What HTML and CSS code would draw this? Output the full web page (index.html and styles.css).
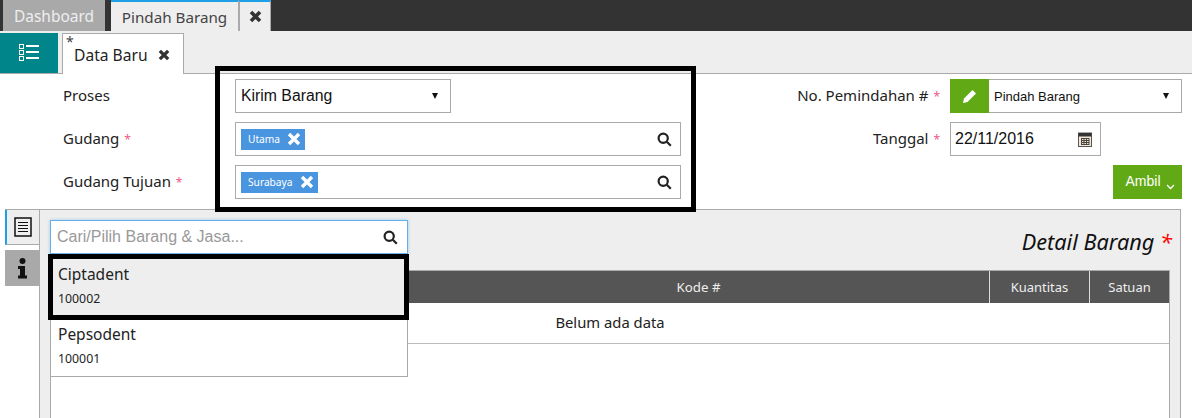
FILE: index.html
```html
<!DOCTYPE html>
<html lang="id">
<head>
<meta charset="utf-8">
<title>Pindah Barang</title>
<link rel="stylesheet" href="styles.css">
</head>
<body>
<nav class="topbar">
  <span class="top-tab dash">Dashboard</span>
  <span class="top-tab active">Pindah Barang</span>
  <span class="top-tab close"><svg width="13" height="13" viewBox="0 0 13 13"><path d="M2 2l9 9M11 2l-9 9" class="x-dark"/></svg></span>
</nav>
<div class="subbar">
  <button class="list-btn"><svg width="20" height="18" viewBox="0 0 20 18"><g fill="none" stroke="#fff"><rect x="0.5" y="0.5" width="4" height="4"/><rect x="0.5" y="6.5" width="4" height="4"/><rect x="0.5" y="12.5" width="4" height="4"/></g><path d="M7 1h13v2H7zM7 7h13v2H7zM7 13h13v2H7z" fill="#fff"/></svg></button>
  <div class="doc-tab"><sup class="mark">*</sup><span>Data Baru</span><svg width="12" height="12" viewBox="0 0 13 13"><path d="M2 2l9 9M11 2l-9 9" class="x-dark"/></svg></div>
</div>
<form class="form">
  <div class="col-left">
    <div class="row"><label class="lbl">Proses</label>
      <div class="field sel-short"><span class="val">Kirim Barang</span><i class="caret"></i></div></div>
    <div class="row"><label class="lbl">Gudang <b class="req">*</b></label>
      <div class="field multi"><span class="chip">Utama<svg width="14" height="14" viewBox="0 0 14 14"><path d="M2 2l10 10M12 2L2 12" class="x-white"/></svg></span><svg class="mag" width="15" height="15" viewBox="0 0 15 15"><circle cx="6.2" cy="6.2" r="4.6" class="mag-s"/><path d="M9.8 9.8l4 4" class="mag-s"/></svg></div></div>
    <div class="row"><label class="lbl">Gudang Tujuan <b class="req">*</b></label>
      <div class="field multi"><span class="chip">Surabaya<svg width="14" height="14" viewBox="0 0 14 14"><path d="M2 2l10 10M12 2L2 12" class="x-white"/></svg></span><svg class="mag" width="15" height="15" viewBox="0 0 15 15"><circle cx="6.2" cy="6.2" r="4.6" class="mag-s"/><path d="M9.8 9.8l4 4" class="mag-s"/></svg></div></div>
  </div>
  <div class="col-right">
    <div class="row-r"><label class="lbl-r">No. Pemindahan # <b class="req">*</b></label>
      <div class="group"><span class="edit"><svg width="16" height="16" viewBox="0 0 16 16"><path d="M1 15l1-4.5L10.500 2l3.500 3.500L5.500 14z" fill="#fff"/></svg></span><div class="field sel-no"><span class="val-small">Pindah Barang</span><i class="caret"></i></div></div></div>
    <div class="row-r"><label class="lbl-r">Tanggal <b class="req">*</b></label>
      <div class="field date"><span class="val">22/11/2016</span><svg width="14" height="15" viewBox="0 0 14 15"><rect x="0.5" y="1" width="13" height="13.500" fill="#f4e8d4" stroke="#555"/><rect x="0.5" y="1" width="13" height="3.500" fill="#333"/><path d="M3 6.500h8M3 8.500h8M3 10.500h8M3 12.500h8M3.500 6v7M6 6v7M8.500 6v7M11 6v7" stroke="#444" stroke-width="1"/></svg></div></div>
    <div class="row-r end"><button type="button" class="ambil">Ambil<svg width="9" height="6" viewBox="0 0 9 6"><path d="M1 1l3.500 3.500L8 1" fill="none" stroke="#fff" stroke-width="1.300"/></svg></button></div>
  </div>
</form>
<section class="detail">
  <aside class="side">
    <span class="side-tab on"><svg width="18" height="20" viewBox="0 0 18 20"><rect x="1" y="1" width="16" height="18" fill="none" stroke="#111" stroke-width="1.500"/><path d="M4 5.500h10M4 8.500h10M4 11.500h10M4 14.500h10" stroke="#111" stroke-width="1.200"/></svg></span>
    <span class="side-tab off"><svg width="11" height="21" viewBox="0 0 11 21"><circle cx="5.500" cy="3" r="3" fill="#111"/><path d="M1 8h7v9.500h2V20.500H1v-3h2V11H1z" fill="#111"/></svg></span>
  </aside>
  <div class="panel">
    <div class="panel-head">
      <div class="search"><span class="ph">Cari/Pilih Barang &amp; Jasa...</span><svg class="mag" width="15" height="15" viewBox="0 0 15 15"><circle cx="6.200" cy="6.200" r="4.600" class="mag-s"/><path d="M9.800 9.800l4 4" class="mag-s"/></svg></div>
      <h2 class="title">Detail Barang <b class="title-req">*</b></h2>
    </div>
    <div class="sheet">
      <div class="thead">
        <span class="th c1"></span>
        <span class="th c2">Kode #</span>
        <span class="th c3">Kuantitas</span>
        <span class="th c4">Satuan</span>
      </div>
      <div class="empty">Belum ada data</div>
    </div>
  </div>
</section>
<ul class="results">
  <li class="res hot"><span class="res-name">Ciptadent</span><span class="res-code">100002</span></li>
  <li class="res"><span class="res-name">Pepsodent</span><span class="res-code">100001</span></li>
</ul>
<div class="hl hl-form"></div>
<div class="hl hl-item"></div>
</body>
</html>
```
FILE: styles.css
```css
* { box-sizing: border-box; }
html, body { margin: 0; padding: 0; height: 418px; overflow: hidden; }
body { position: relative; background: #fff; color: #222; font-family: "Noto Sans", "Open Sans", sans-serif; font-size: 14px; }

.x-dark { stroke: #333; stroke-width: 3.600; fill: none; }
.x-white { stroke: #fff; stroke-width: 3.400; fill: none; }
.mag-s { stroke: #222; stroke-width: 2.200; fill: none; }

.topbar { display: flex; height: 31px; background: #333; padding-left: 3px; }
.top-tab { display: flex; align-items: center; justify-content: center; height: 31px; }
.dash { width: 102px; background: #a9a9a9; color: #eee; margin-right: 6px; font-size: 15.500px; }
.active { width: 127px; background: #eee; color: #444; border-top: 2px solid #1ea0e6; font-size: 15.200px; }
.close { width: 33px; background: #eee; border-top: 2px solid #1ea0e6; border-left: 2px solid #aaa; border-right: 1px solid #aaa; }

.subbar { display: flex; height: 43px; background: #eee; padding-top: 2px; border-bottom: 1px solid #aaa; }
.list-btn { width: 58px; height: 40px; background: #00868a; border: 0; display: flex; align-items: center; justify-content: center; padding: 0; margin-right: 4px; }
.doc-tab { width: 122px; height: 41px; background: #fff; border: 1px solid #aaa; border-bottom: 0; display: flex; align-items: center; font-size: 15.600px; gap: 10px; padding: 1px 0 0 11px; position: relative; color: #222; }
.mark { position: absolute; left: 3px; top: 0; font-size: 14px; line-height: 1.200; color: #444; }

.form { display: flex; justify-content: space-between; height: 135px; padding: 5px 10px 0 63px; }
.col-left, .col-right { display: flex; flex-direction: column; gap: 9px; }
.row { display: flex; align-items: center; height: 34px; }
.lbl { width: 172px; font-size: 15px; color: #222; padding-bottom: 2px; }
.req { color: #ee5a8a; font-weight: 400; font-size: 12px; margin-left: 1px; }
.field { display: flex; align-items: center; height: 34px; border: 1px solid #aaa; background: #fff; }
.sel-short { width: 216px; padding: 0 12px 0 5px; justify-content: space-between; }
.multi { width: 446px; padding: 0 8px 0 5px; justify-content: space-between; }
.val { font-family: "Liberation Sans", sans-serif; font-size: 16px; color: #111; }
.sel-short .val { font-size: 15.800px; }
.val-small { font-family: "Liberation Sans", sans-serif; font-size: 13px; color: #111; }
.caret { width: 0; height: 0; border-left: 3.500px solid transparent; border-right: 3.500px solid transparent; border-top: 6px solid #111; }
.chip { display: flex; align-items: center; gap: 7px; height: 21px; padding: 0 4px 0 7px; background: #4a95e0; color: #fff; font-size: 10.200px; }

.row-r { display: flex; align-items: center; height: 34px; width: 400px; }
.end { justify-content: flex-end; }
.lbl-r { width: 168px; flex: none; padding: 0 10px 2px 0; text-align: right; font-size: 15px; color: #222; white-space: nowrap; }
.group { display: flex; width: 232px; height: 34px; }
.edit { width: 39px; background: #62a916; display: flex; align-items: center; justify-content: center; }
.sel-no { flex: 1; border-left: 0; padding: 0 12px 0 5px; justify-content: space-between; }
.date { width: 151px; padding: 0 8px 0 4px; justify-content: space-between; }
.ambil { width: 69px; height: 34px; border: 0; background: #62a916; color: #fff; font-family: "Liberation Sans", sans-serif; font-size: 14px; padding: 0 0 2px 5px; display: flex; align-items: center; gap: 5px; justify-content: center; }
.ambil svg { margin-top: 11px; }

.detail { display: flex; height: 209px; padding-left: 5px; }
.side { width: 35px; border-top: 1px solid #aaa; display: flex; flex-direction: column; gap: 5px; }
.side-tab { display: flex; align-items: center; justify-content: center; width: 35px; height: 36px; }
.on { background: #eee; border-left: 2px solid #1ea0e6; border-bottom: 1px solid #aaa; height: 35px; padding-right: 2px; }
.off { background: #a9a9a9; width: 34px; }
.panel { width: 1142px; background: #eee; border: 1px solid #aaa; border-bottom: 0; display: flex; flex-direction: column; padding: 10px 10px 0; margin-left: -1px; }
.panel-head { display: flex; justify-content: space-between; height: 50px; }
.search { width: 358px; height: 34px; background: #fff; border: 1px solid #66afe9; box-shadow: 0 0 3px rgba(102,175,233,.6); display: flex; align-items: center; justify-content: space-between; padding: 0 9px 0 6px; }
.ph { font-family: "Liberation Sans", sans-serif; font-size: 16px; color: #999; }
.title { margin: 8px -2px 0 0; font-size: 21.700px; font-weight: 400; font-style: italic; color: #111; line-height: 27px; }
.title-req { color: #f00; font-weight: 400; }
.sheet { flex: 1; background: #fff; border-right: 1px solid #aaa; border-left: 1px solid #aaa; }
.thead { display: flex; height: 33px; background: #555; border-top: 1px solid #aaa; margin-left: -1px; }
.th { display: flex; align-items: center; justify-content: center; color: #eee; font-size: 13px; border-right: 1px solid #ddd; }
.c1 { width: 359px; border-right: 0; }
.c2 { width: 581px; font-size: 13.300px; padding-right: 1px; }
.c3 { width: 100px; }
.c4 { width: 79px; border-right: 0; }
.empty { height: 41px; display: flex; align-items: center; justify-content: center; font-size: 14.800px; border-bottom: 1px solid #bbb; color: #222; padding-bottom: 2px; }

.results { position: absolute; left: 50px; top: 255px; width: 358px; margin: 0; padding: 0; list-style: none; background: #fff; border: 1px solid #aaa; border-top: 0; }
.res { display: flex; flex-direction: column; height: 60px; padding: 8px 7px 0; }
.hot { background: #eee; height: 61px; padding-top: 9px; }
.res-name { font-size: 15.500px; line-height: 20px; color: #222; }
.res-code { font-size: 12.300px; line-height: 16px; margin-top: 7px; color: #222; }

.hl { position: absolute; border: 5px solid #000; pointer-events: none; }
.hl-form { left: 215px; top: 66px; width: 481px; height: 146px; }
.hl-item { left: 48px; top: 254px; width: 361px; height: 66px; }
```
